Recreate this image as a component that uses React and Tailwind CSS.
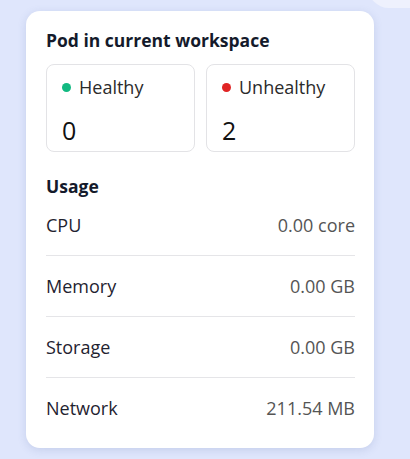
import React from 'react';

const usage = [
  { label: 'CPU', value: '0.00 core' },
  { label: 'Memory', value: '0.00 GB' },
  { label: 'Storage', value: '0.00 GB' },
  { label: 'Network', value: '211.54 MB' },
];

function StatusCard({ label, count, dot }) {
  return (
    <div className="h-[88px] rounded-lg border border-[#e3e3e6] bg-white px-[15px] pt-[10px] flex flex-col justify-between pb-[5px]">
      <div className="flex items-center gap-[8px] text-[18px] leading-6 text-[#2b2b2b]">
        <span className={`w-[9px] h-[9px] rounded-full ${dot}`} />
        {label}
      </div>
      <div className="text-[25px] leading-8 text-[#111]">{count}</div>
    </div>
  );
}

export default function App() {
  return (
    <div className="relative w-[410px] h-[459px] overflow-hidden bg-[#dfe6fc] font-['Open_Sans',sans-serif]">
      {/* edge of the next card peeking in */}
      <div className="absolute -right-[30px] -top-[34px] w-[72px] h-[42px] rounded-full bg-[#eef1fd]" />

      <div className="pt-[11px] pl-[26px]">
        <div className="w-[348px] h-[437px] rounded-[14px] bg-white shadow-[0_2px_8px_rgba(80,100,160,0.18)] pl-5 pr-[19px] pt-[17px]">
          <h2 className="text-[17.5px] leading-6 font-bold text-[#141a2b]">
            Pod in current workspace
          </h2>

          <div className="mt-3 grid grid-cols-2 gap-[11px]">
            <StatusCard label="Healthy" count="0" dot="bg-[#12b981]" />
            <StatusCard label="Unhealthy" count="2" dot="bg-[#e02424]" />
          </div>

          <h3 className="mt-[22px] text-[17.5px] leading-6 font-bold text-[#141a2b]">Usage</h3>

          <div className="mt-[15px]">
            {usage.map((row, i) => (
              <div
                key={row.label}
                className={`flex justify-between text-[18px] leading-6 pb-[18px] ${
                  i > 0 ? 'pt-[18px] border-t border-[#e5e5e8]' : ''
                }`}
              >
                <span className="text-[#1f2330]">{row.label}</span>
                <span className="text-[#555]">{row.value}</span>
              </div>
            ))}
          </div>
        </div>
      </div>
    </div>
  );
}
